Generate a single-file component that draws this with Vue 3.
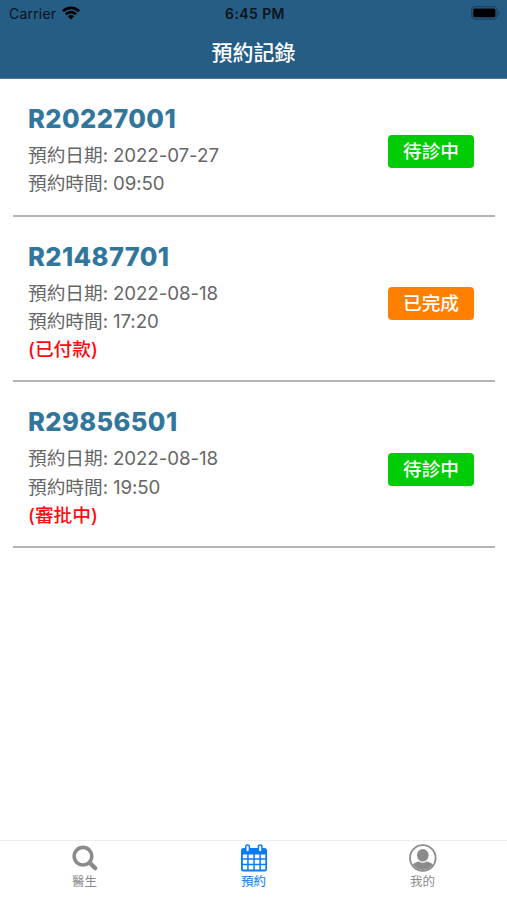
<script setup>
import { ref } from 'vue'

const records = [
  { id: 'R20227001', date: '2022-07-27', time: '09:50', status: '待診中', type: 'pending' },
  { id: 'R21487701', date: '2022-08-18', time: '17:20', note: '已付款', status: '已完成', type: 'done' },
  { id: 'R29856501', date: '2022-08-18', time: '19:50', note: '審批中', status: '待診中', type: 'pending' },
]

const tabs = [
  { name: 'doctor', label: '醫生' },
  { name: 'booking', label: '預約' },
  { name: 'mine', label: '我的' },
]

const activeTab = ref('booking')
</script>

<template>
  <div class="screen">
    <header class="header">
      <div class="status-bar">
        <div class="carrier">
          <span>Carrier</span>
          <svg class="wifi" viewBox="0 0 18 14">
            <path d="M1 5.2a11.4 11.4 0 0 1 16 0M3.9 8.2a7.2 7.2 0 0 1 10.2 0" />
            <path class="dot" d="M9 13.4 5.9 10.3a4.4 4.4 0 0 1 6.2 0z" />
          </svg>
        </div>
        <span class="clock">6:45 PM</span>
        <div class="power">
          <svg class="battery" viewBox="0 0 30 14">
            <rect class="shell" x="0.6" y="0.6" width="25.4" height="12.6" rx="3.6" />
            <rect x="2.2" y="2.5" width="22.2" height="8.8" rx="1.6" />
            <path class="cap" d="M27.3 5v4c1.8-.8 1.8-3.2 0-4z" />
          </svg>
        </div>
      </div>
      <h1 class="title">預約記錄</h1>
    </header>

    <main class="list">
      <article v-for="record in records" :key="record.id" class="record">
        <div class="info">
          <h2 class="number">{{ record.id }}</h2>
          <p>預約日期: <span class="value">{{ record.date }}</span></p>
          <p>預約時間: <span class="value">{{ record.time }}</span></p>
          <p v-if="record.note" class="note">({{ record.note }})</p>
        </div>
        <span class="badge" :class="record.type">{{ record.status }}</span>
      </article>
    </main>

    <nav class="tabs">
      <button
        v-for="tab in tabs"
        :key="tab.name"
        class="tab"
        :class="{ active: tab.name === activeTab }"
        @click="activeTab = tab.name"
      >
        <svg v-if="tab.name === 'doctor'" class="icon" viewBox="0 0 28 28">
          <circle cx="12" cy="12.2" r="8.8" fill="none" stroke="currentColor" stroke-width="3.6" />
          <path d="m19 19 5.2 5.2" fill="none" stroke="currentColor" stroke-width="4.4" stroke-linecap="round" />
        </svg>
        <svg v-else-if="tab.name === 'booking'" class="icon" viewBox="0 0 28 28">
          <rect x="1" y="4" width="26" height="23.4" rx="2.5" fill="currentColor" />
          <path
            fill="#fff"
            d="M2.8 10.4h4.4v3.9H2.800zM8.700 10.400h4.600v3.900H8.700zM14.800 10.400h4.600v3.900h-4.600zM20.900 10.400h4.400v3.900h-4.400zM2.800 15.800h4.400v3.900H2.800zM8.700 15.800h4.600v3.900H8.700zM14.800 15.800h4.600v3.900h-4.600zM20.900 15.800h4.400v3.900h-4.400zM2.800 21.200h4.400v4.400H2.800zM8.700 21.200h4.600v4.400H8.700zM14.800 21.200h4.600v4.400h-4.600zM20.900 21.200h4.400v4.400h-4.400z"
          />
          <rect class="ring" x="5.8" y="1" width="3.6" height="7" rx="1.8" />
          <rect class="ring" x="18.4" y="1" width="3.6" height="7" rx="1.8" />
        </svg>
        <svg v-else class="icon" viewBox="0 0 28 28">
          <circle cx="13.8" cy="14" r="12.8" fill="none" stroke="currentColor" stroke-width="1.8" />
          <ellipse cx="13.8" cy="11.2" rx="5.8" ry="6.3" fill="currentColor" />
          <path fill="currentColor" d="M3.8 20.6c1.2-1.8 3.5-2.5 6-3.2 2.4 1.9 5.600 1.900 8 0 2.500.7 4.800 1.400 6 3.200A12 12 0 0 1 3.800 20.600z" />
        </svg>
        <span>{{ tab.label }}</span>
      </button>
    </nav>
  </div>
</template>

<style>
body {
  margin: 0;
  background: #fff;
}
</style>

<style scoped>
.screen {
  display: flex;
  flex-direction: column;
  height: 100vh;
  font-family: Inter, 'Noto Sans CJK TC', sans-serif;
  background: #fff;
}
.header {
  height: 79px;
  box-sizing: border-box;
  background: #265d85;
  border-bottom: 1px solid #4b7d9f;
}
.status-bar {
  display: grid;
  grid-template-columns: 1fr auto 1fr;
  align-items: center;
  height: 27px;
  padding: 0 6px 0 9px;
  font-size: 14px;
  color: #07131c;
}
.carrier {
  display: flex;
  align-items: center;
  gap: 6px;
  letter-spacing: 0.2px;
}
.wifi {
  width: 18px;
  height: 14px;
  margin-top: -2px;
  fill: none;
  stroke: #000;
  stroke-width: 2.7;
}
.wifi .dot {
  fill: #000;
  stroke: none;
}
.clock {
  font-weight: 600;
  letter-spacing: 0.4px;
}
.power {
  display: flex;
  justify-content: flex-end;
}
.battery {
  width: 30px;
  height: 14px;
  margin-top: -1px;
}
.battery .shell {
  fill: none;
  stroke: #1b425f;
  stroke-width: 1.2;
}
.battery .cap {
  fill: #1b425f;
}
.title {
  margin: 0;
  font-size: 21px;
  font-weight: 500;
  line-height: 51px;
  text-align: center;
  color: #fff;
}
.list {
  flex: 1;
  padding: 0 12px 0 13px;
}
.record {
  display: flex;
  align-items: center;
  justify-content: space-between;
  padding: 23px 21px 16.2px 15px;
  border-bottom: 2px solid #b5b5b5;
}
.info p {
  margin: 0;
  font-size: 18.7px;
  line-height: 28.2px;
  color: #666;
}
.info .number {
  margin: 0 0 6px;
  font-size: 25.5px;
  font-weight: 800;
  line-height: 34px;
  letter-spacing: 0.4px;
  color: #32769b;
}
.info .value {
  margin-left: -0.5px;
  letter-spacing: -0.05px;
}
.info .note {
  font-weight: 500;
  color: #ff0a0f;
}
.badge {
  width: 86px;
  height: 33px;
  margin-top: 3.4px;
  border-radius: 4px;
  font-size: 18.7px;
  font-weight: 500;
  line-height: 34px;
  text-align: center;
  color: #fff;
}
.badge.pending {
  background: #00cc05;
}
.badge.done {
  background: #ff8000;
}
.tabs {
  display: grid;
  grid-template-columns: repeat(3, 1fr);
  height: 60px;
  box-sizing: border-box;
  border-top: 1px solid #ececec;
}
.tab {
  display: flex;
  flex-direction: column;
  align-items: center;
  padding: 3px 0 0;
  border: 0;
  background: none;
  font-family: inherit;
  font-size: 12.5px;
  line-height: 19px;
  color: #8b8b8b;
}
.tab.active {
  color: #0b7bf0;
}
.icon {
  width: 28px;
  height: 28px;
}
.ring {
  fill: #fff;
  stroke: currentColor;
  stroke-width: 1.5;
}
</style>
